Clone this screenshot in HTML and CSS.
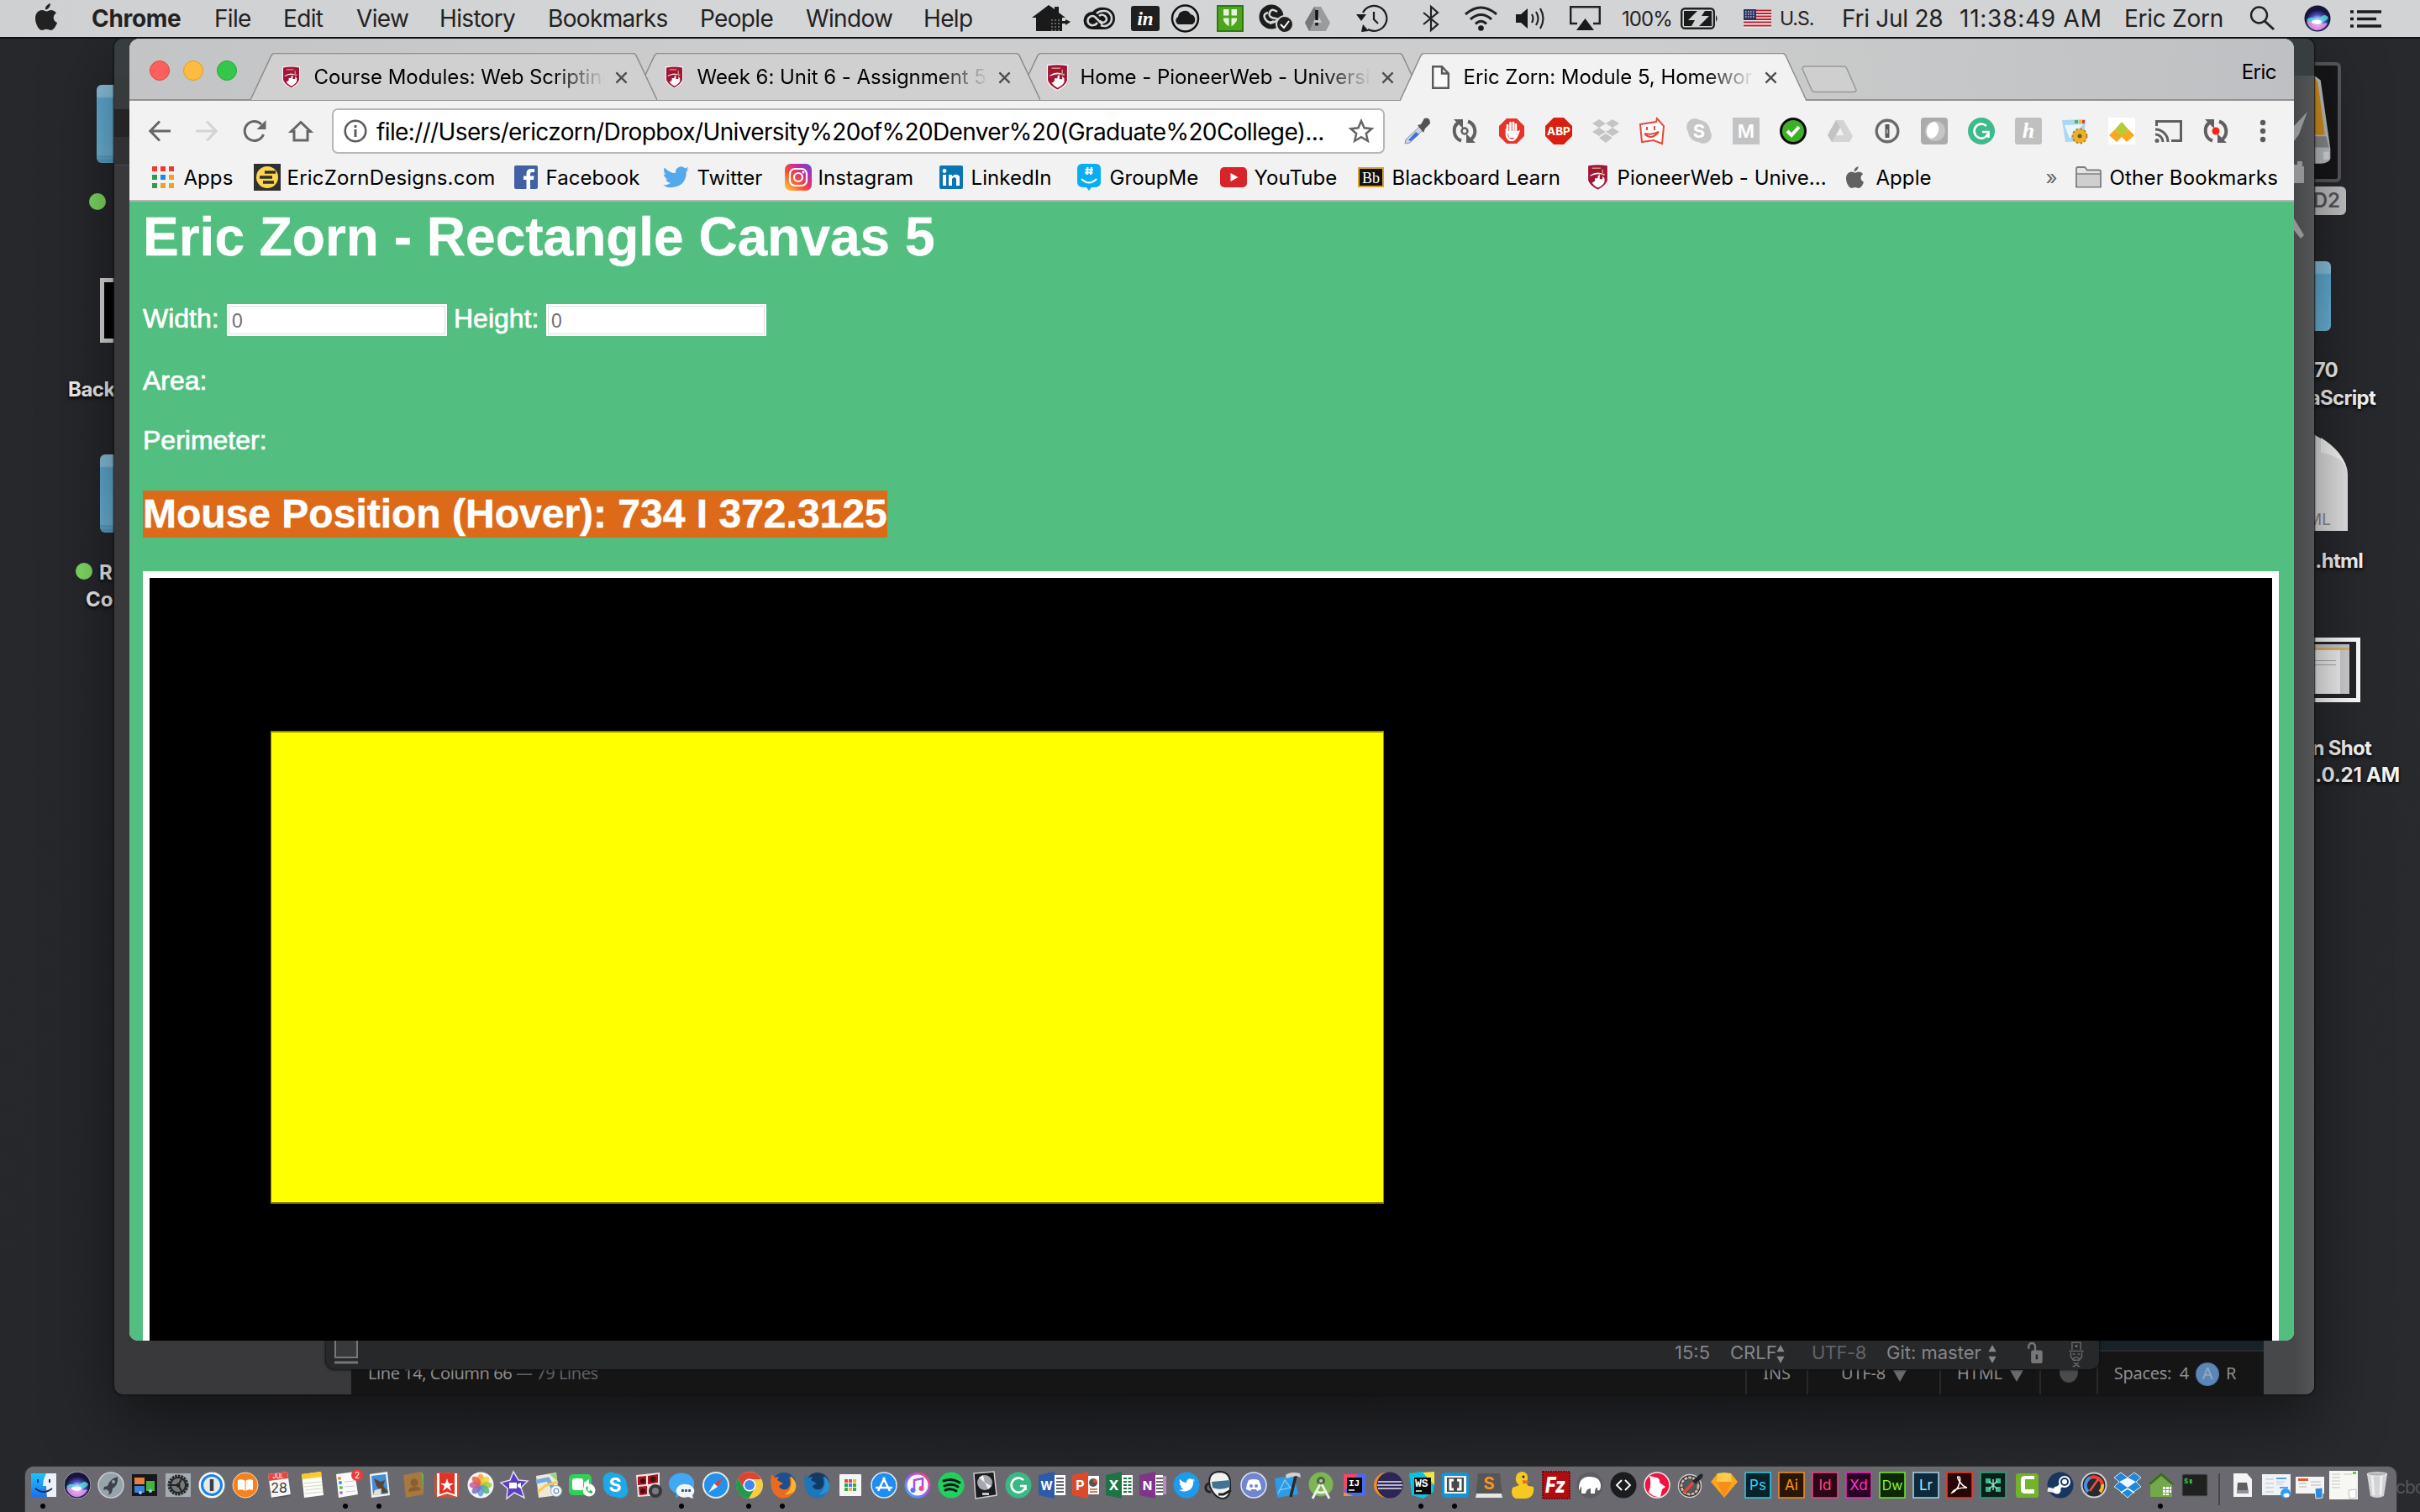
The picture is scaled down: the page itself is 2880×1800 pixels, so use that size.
FILE: index.html
```html
<!DOCTYPE html>
<html lang="en">
<head>
<meta charset="utf-8">
<title>Eric Zorn: Module 5, Homework</title>
<link rel="stylesheet" href="styles.css">
</head>
<body>
<svg class="defs" aria-hidden="true">
  <defs>
    <symbol id="shield" viewBox="0 0 22 28"><path d="M0 1Q11-1 22 1V17Q21 23 11 28Q1 23 0 17Z" fill="#fff"/><path d="M1 2Q11 0 21 2V17Q20 22 11 27Q2 22 1 17Z" fill="#a31538"/><path d="M5 20L8 18V15H11V13L13 11V16H16V13L18 15V19Q16 23 11 25Q7 23 5 20ZM3 12Q10 7 17 11L18 10V12Q10 9 3 13Z" fill="#fff"/><path d="M5 4.500H14M16 6V12" stroke="#c9a070" stroke-width="1.300"/></symbol>
    <symbol id="apple" viewBox="0 0 26 32"><path d="M18 0C18 4 15 7.500 12 7.500C11.600 4 14.500 1 18 0ZM18.500 8C21 8 23.500 9.300 25 11.500C20 14.500 21 21 26 23C24.500 27.500 21.500 32 18.500 32C16.500 32 15.500 30.800 13.200 30.800C11 30.800 9.800 32 8 32C4 32 0 24 0 18C0 11.500 4 8 8 8C10.300 8 12 9.500 13.500 9.500C15 9.500 16.500 8 18.500 8Z"/></symbol>
    <symbol id="bird" viewBox="0 0 24 20"><path d="M24 2.300Q22.700 3 21.200 3.200Q22.700 2.200 23.300.5Q21.800 1.300 20.100 1.700A5 5 0 0 0 11.700 6.200Q5.500 5.900 1.500 1Q-.5 5 3 7.500Q2 7.500 .8 6.900Q.9 10.700 4.700 11.800Q3.700 12 2.500 11.800Q3.600 15 7.100 15.300Q4 17.700 0 17.300Q3 19.400 7.500 19.400Q21.700 18.600 21.500 4.800Q23 3.800 24 2.300Z"/></symbol>
    <symbol id="tab" viewBox="0 0 484 57" preserveAspectRatio="none"><path d="M0 57L25 3Q26.500.5 29 .5H455Q457.500.5 459 3L484 57"/></symbol>
    <symbol id="close" viewBox="0 0 16 16"><path d="M1.500 1.500L14.500 14.500M14.500 1.500L1.500 14.500" stroke="#4b4b4b" stroke-width="2.400"/></symbol>
    <symbol id="sync" viewBox="0 0 32 32"><path d="M9 5.500A12.500 12.500 0 0 0 12 27.500M23 26.500A12.500 12.500 0 0 0 20 4.500" fill="none" stroke="#5f6062" stroke-width="4"/><path d="M3 2H14V13ZM29 30H18V19Z" fill="#5f6062"/></symbol>
    <radialGradient id="sirig" cx=".5" cy=".65"><stop offset="0" stop-color="#fff"/><stop offset=".3" stop-color="#b9c8ff"/><stop offset=".6" stop-color="#4b50c0"/><stop offset="1" stop-color="#17153b"/></radialGradient>
    <symbol id="siri" viewBox="0 0 32 32"><circle cx="16" cy="16" r="15.500" fill="#17153b"/><circle cx="16" cy="16" r="14.500" fill="url(#sirig)"/><path d="M3 18C9 10 14 20 19 15S27 12 29 15C26 21 20 20 16 20S8 24 3 18Z" fill="#4fe3dc" opacity=".8"/><path d="M3 20C8 17 12 24 18 23S26 20 28 22C24 29 18 30 15 30S6 28 3 20Z" fill="#f59be2" opacity=".8"/><ellipse cx="15" cy="20" rx="6" ry="2.500" fill="#fff"/></symbol>
    <linearGradient id="bluev" x2="0" y2="1"><stop offset="0" stop-color="#1ac7fb"/><stop offset="1" stop-color="#1d6ff2"/></linearGradient>
    <linearGradient id="insta" x1="0" y1="1" x2="1" y2="0"><stop offset="0" stop-color="#ffd34d"/><stop offset=".4" stop-color="#f5502f"/><stop offset=".7" stop-color="#c32aa3"/><stop offset="1" stop-color="#5b4ddb"/></linearGradient>
    <linearGradient id="rainbow" x1="0" y1="1" x2="1" y2="0"><stop offset="0" stop-color="#23b8ff"/><stop offset=".5" stop-color="#9a5bf5"/><stop offset="1" stop-color="#ff3d68"/></linearGradient>
  </defs>
</svg>

<!-- Desktop icons -->
<div class="desk folder f1"></div><div class="desk dot d1"></div>
<div class="desk frame"></div><div class="desk label l1">Back</div>
<div class="desk folder f2"></div><div class="desk dot d2"></div>
<div class="desk label l2">R</div><div class="desk label l3">Co</div>
<div class="desk drive"><svg viewBox="0 0 60 135"><path d="M0 4H18L26 10L40 108V122Q38 128 26 129H0Z" fill="#c2c7ca"/><path d="M0 5H16L22 12L32 88H0Z" fill="#dc981f"/><path d="M0 90H34L38 106H0Z" fill="#8d9092"/><path d="M30 112H38V123H30Z" fill="#e2e6e8"/></svg></div>
<div class="desk tag">D2</div>
<div class="desk folder f3"></div>
<div class="desk label r1">70</div><div class="desk label r2">aScript</div>
<svg class="desk doc" viewBox="0 0 94 117"><path d="M0 0H50Q94 24 94 50V117H0Z" fill="#e4e4e4"/><path d="M62 6Q88 22 93 44Q88 28 62 24Z" fill="#fafafa"/><text x="74" y="110" text-anchor="end" font-size="19" fill="#8a8a8a">ML</text></svg>
<div class="desk label r3">.html</div>
<div class="desk thumb"><i></i></div>
<div class="desk label r4">n Shot</div><div class="desk label r5">.0.21 AM</div>

<!-- Text editor behind the browser -->
<section class="win editor">
  <div class="ed-top"></div><div class="ed-tabs"></div><div class="ed-sub"></div><div class="ed-body"></div>
  <div class="ed-right"><svg viewBox="0 0 24 160"><path d="M0 18L16 1L6 28L0 36ZM0 64H4V60H10V66H12V86H0ZM0 128L12 148L8 152L0 142Z" fill="#929394"/></svg></div>
  <footer class="ed-status">
    <span class="pos">Line 14, Column 66 <em>— 79 Lines</em></span>
    <span class="cell">INS</span><span class="cell">UTF-8 <b class="tri"></b></span><span class="cell">HTML <b class="tri"></b></span><span class="cell"><b class="ball"></b></span>
    <span class="cell spaces">Spaces:&nbsp; 4 <b class="lamp">A</b> R</span>
  </footer>
</section>

<!-- IDE window behind the browser -->
<section class="win ide">
  <svg class="ide-box" viewBox="0 0 28 42"><path d="M1 0V34H27V0Z" fill="#38393a" stroke="#777" stroke-width="2"/><path d="M0 40H28" stroke="#777" stroke-width="3"/></svg>
  <div class="ide-info">
    <span>15:5</span><span>CRLF</span><svg viewBox="0 0 12 26"><path d="M6 1L11 10H1ZM6 25L11 16H1Z" fill="#85868a"/></svg><span class="dim">UTF-8</span><span>Git: master</span><svg viewBox="0 0 12 26"><path d="M6 1L11 10H1ZM6 25L11 16H1Z" fill="#85868a"/></svg>
    <svg viewBox="0 0 20 28"><path d="M2 9V6A4 4 0 0 1 10 6V12" fill="none" stroke="#777" stroke-width="2.500"/><rect x="5" y="11" width="14" height="16" rx="2" fill="#777"/><path d="M12 16V22" stroke="#28292b" stroke-width="2.500"/></svg>
    <svg viewBox="0 0 26 44"><path d="M6 15V3H20V15M1 17H25M4 19V26L8 32H18L22 26V19M7 22H11M15 22H19M8 30Q13 24 18 30M7 42H11M15 42H19M9 36L17 42M17 36L9 42" fill="none" stroke="#66676a" stroke-width="2"/><circle cx="13" cy="9" r="2" fill="#777"/></svg>
  </div>
</section>

<!-- Menu bar -->
<header class="menubar">
  <svg class="m-apple" viewBox="0 0 26 32"><use href="#apple" fill="#222"/></svg>
  <b>Chrome</b><span>File</span><span>Edit</span><span>View</span><span>History</span><span>Bookmarks</span><span>People</span><span>Window</span><span>Help</span>
  <svg width="46" height="34" viewBox="0 0 46 34"><path d="M0 16L20 1L27 6V3H32V10L40 16H36V20H40V18L46 21L40 25V23H36V32H5V16Z"/><path d="M23 19H34M23 23H34M23 27H34M23 31H34" stroke="#aaa" stroke-dasharray="2 2"/></svg>
  <svg width="40" height="28" viewBox="0 0 40 28"><path d="M12 6Q18 0 26 1A13 13 0 0 1 26 27H12A10.500 10.500 0 0 1 12 6Z" fill="#161616"/><g fill="none" stroke="#d4d5d6" stroke-width="2.600"><path d="M24 21L15 12A5.500 5.500 0 1 0 13 22Q16 22 18 19M17 8Q20 5 25 5A9 9 0 1 1 22 22M20 11Q23 8 27 11Q31 15 27 18Q24 20 21 17"/></g></svg>
  <svg width="34" height="30" viewBox="0 0 34 30"><rect width="34" height="30" rx="3" fill="#1f1f20"/><text x="17" y="23" text-anchor="middle" class="serif-i" font-size="23" fill="#fff">in</text></svg>
  <svg width="35" height="34" viewBox="0 0 35 34"><circle cx="17.500" cy="17" r="15.500" fill="none" stroke="#111" stroke-width="2.500"/><path d="M9 24A5 5 0 0 1 9 15A8 8 0 0 1 24 12A6.500 6.500 0 0 1 26 24Z"/></svg>
  <svg width="32" height="32" viewBox="0 0 32 32"><rect x="1" y="1" width="30" height="30" fill="#4da51d" stroke="#2c7a10" stroke-width="2"/><path d="M8 5H24V18Q22 23 16 26Q10 23 8 18Z" fill="#e4f4dc"/><path d="M16 5V26M8 14H24" stroke="#4da51d" stroke-width="3"/></svg>
  <svg width="41" height="34" viewBox="0 0 41 34"><circle cx="15" cy="15" r="14.500" fill="#1c1c1c"/><path d="M22 9Q15 4 13 10T20 17T13 23M11 10Q4 12 8 18T18 20" fill="none" stroke="#d4d5d6" stroke-width="2.500"/><circle cx="31" cy="24" r="10" fill="#222" stroke="#d4d5d6" stroke-width="2"/><path d="M26 24L30 28L36 20" fill="none" stroke="#fff" stroke-width="2"/></svg>
  <svg width="30" height="30" viewBox="0 0 30 30"><path d="M11 1H19L30 20L25 30H5L0 20Z" fill="#9a9b9c"/><path d="M11 1L15 9L5 30L0 20Z" fill="#77787a"/><path d="M15 10L10 20H20Z" fill="#c8c9ca"/><path d="M14 5V17M14 20V23.500" stroke="#111" stroke-width="3.500"/></svg>
  <svg width="38" height="34" viewBox="0 0 38 34"><g fill="none" stroke="#1d1d1d" stroke-width="2.200"><path d="M8 10A15 15 0 1 1 14 30M21 9V18L26 23"/></g><path d="M0 12H12L6 20ZM6 33L8 24L15 32Z"/></svg>
  <svg width="20" height="32" viewBox="0 0 20 32"><path d="M1 9L18 23L10 30V2L18 9L1 23" fill="none" stroke="#222" stroke-width="2.200"/></svg>
  <svg width="41" height="30" viewBox="0 0 41 30"><g fill="none" stroke="#222" stroke-width="3"><path d="M2 10Q20.500-6 39 10M8 16Q20.500 5 33 16M14 21.500Q20.500 15 27 21.500"/></g><circle cx="20.500" cy="26.500" r="3.300"/></svg>
  <svg width="34" height="28" viewBox="0 0 34 28"><path d="M0 9H6L14 2V26L6 19H0Z"/><path d="M19 9Q22 14 19 19M24 6Q29 14 24 22M29 2Q36 14 29 26" fill="none" stroke="#222" stroke-width="2.200"/></svg>
  <svg width="37" height="30" viewBox="0 0 37 30"><path d="M9 21H1.200V1.200H35.800V21H28" fill="none" stroke="#222" stroke-width="2.400"/><path d="M18.500 15L29 29H8Z"/></svg>
  <span class="sm">100%</span>
  <svg width="46" height="26" viewBox="0 0 46 26"><rect x="1.200" y="1.200" width="38.600" height="23.600" rx="4" fill="none" stroke="#222" stroke-width="2.400"/><path d="M42 9Q45 13 42 17Z"/><path d="M4 4H20L9 15H17L13 22H4ZM22 22L34 10H25L29 4H37V22Z"/></svg>
  <svg width="33" height="22" viewBox="0 0 33 22"><path fill="#f4f0f0" d="M0 0H33V22H0Z"/><path d="M0 1.500H33M0 5H33M0 8.500H33M0 12H33M0 15.500H33M0 19.500H33" stroke="#b3202f" stroke-width="1.900"/><path fill="#303460" d="M0 0H15V13H0Z"/><path d="M2 3H14M2 6H14M2 9H14" stroke="#c9cbe0" stroke-dasharray="1.500 1.500" stroke-width="1.400"/></svg>
  <span class="sm us">U.S.</span><span class="tight">Fri Jul 28</span><span class="wide">11:38:49 AM</span><span class="tight">Eric Zorn</span>
  <svg width="31" height="30" viewBox="0 0 31 30"><circle cx="11.500" cy="11" r="9.500" fill="none" stroke="#222" stroke-width="2.400"/><path d="M18 18L29 28" stroke="#222" stroke-width="3"/></svg>
  <svg width="32" height="32"><use href="#siri"/></svg>
  <svg width="37" height="21" viewBox="0 0 37 21"><path d="M0 2H4M8 2H37M0 10.500H4M8 10.500H31M0 19H4M8 19H37" stroke="#1d1d1d" stroke-width="3.600"/></svg>
</header>

<!-- Browser window -->
<main class="win browser">
  <nav class="tabstrip">
    <div class="lights"><i></i><i></i><i></i></div>
    <div class="tab"><svg class="shape"><use href="#tab"/></svg><svg class="fav"><use href="#shield"/></svg><span class="title">Course Modules: Web Scripting</span><svg class="x"><use href="#close"/></svg></div>
    <div class="tab"><svg class="shape"><use href="#tab"/></svg><svg class="fav"><use href="#shield"/></svg><span class="title">Week 6: Unit 6 - Assignment 5</span><svg class="x"><use href="#close"/></svg></div>
    <div class="tab"><svg class="shape"><use href="#tab"/></svg><svg class="fav big"><use href="#shield"/></svg><span class="title">Home - PioneerWeb - Universit</span><svg class="x"><use href="#close"/></svg></div>
    <div class="tab active"><svg class="shape"><use href="#tab"/></svg><svg class="fav" viewBox="0 0 21 28"><path d="M1.200 1.200H12L19.800 9.500V26.800H1.200ZM12 1.200V9.500H19.800" fill="#fafafa" stroke="#5a5a5a" stroke-width="2.400"/></svg><span class="title">Eric Zorn: Module 5, Homewor</span><svg class="x"><use href="#close"/></svg></div>
    <svg class="newtab" viewBox="0 0 66 33"><path d="M4 1H50Q53 1 54 4L65 29Q65 31.500 62 31.500H16Q13 31.500 12 29L1 4Q1 1 4 1Z" fill="#cfcfd0" stroke="#98999a" stroke-width="1.500"/></svg>
    <span class="profile">Eric</span>
  </nav>

  <div class="toolbar">
    <svg width="26" height="26" viewBox="0 0 26 26"><path d="M26 13H2M13 1.500L1.800 13L13 24.500" fill="none" stroke="#666" stroke-width="3"/></svg>
    <svg width="26" height="26" viewBox="0 0 26 26"><path d="M0 13H24M13 1.500L24.200 13L13 24.500" fill="none" stroke="#d4d4d4" stroke-width="3"/></svg>
    <svg width="28" height="28" viewBox="0 0 28 28"><path d="M24.500 18A11.500 11.500 0 1 1 22 6" fill="none" stroke="#666" stroke-width="3"/><path d="M27.500 1V12H16.500Z" fill="#666"/></svg>
    <svg width="26" height="26" viewBox="0 0 26 26"><path d="M1.500 13.500L13 2.500L24.500 13.500H21V24H5V13.500Z" fill="none" stroke="#666" stroke-width="3"/></svg>
    <div class="address">
      <svg width="28" height="28" viewBox="0 0 28 28"><circle cx="14" cy="14" r="12.300" fill="none" stroke="#5c5c5c" stroke-width="2.600"/><path d="M14 12V21M14 7V10" stroke="#5c5c5c" stroke-width="3"/></svg>
      <span class="url">file:///Users/ericzorn/Dropbox/University%20of%20Denver%20(Graduate%20College)...</span>
      <svg width="30" height="30" viewBox="0 0 30 30"><path d="M15 3L18.600 11.300L27.500 12.200L20.800 18L22.800 26.800L15 22.200L7.200 26.800L9.200 18L2.500 12.200L11.400 11.300Z" fill="none" stroke="#666" stroke-width="2.500"/></svg>
    </div>
    <div class="ext">
      <svg viewBox="0 0 32 32"><path d="M18 11L22 15L7 30L1 31L2 26Z" fill="#c9d4e8" stroke="#8a93a0"/><path d="M14 17L18 20L8 28L5 27Z" fill="#3f70dc"/><path d="M16 9L20 8L24 1Q31-1 31 7L25 13L23 18Z" fill="#525354"/></svg>
      <svg viewBox="0 0 32 32"><use href="#sync"/><circle cx="16" cy="16" r="3.500" fill="none" stroke="#5f6062" stroke-width="2.500"/></svg>
      <svg viewBox="0 0 32 32"><path d="M10 1H22L31 10V22L22 31H10L1 22V10Z" fill="#e5352b"/><path d="M10 14V21Q11 27 17 27Q21 26 24 17L21 18V8M11 18V9M14.500 17V6M18 17V6M21 18V8" fill="none" stroke="#fff" stroke-width="2.600" stroke-linecap="round"/><path d="M11 16H21V24H13Z" fill="#fff"/></svg>
      <svg viewBox="0 0 32 32"><path d="M10 0H22L32 10V22L22 32H10L0 22V10Z" fill="#d81f10"/><text x="16" y="21" text-anchor="middle" font-size="13.500" font-weight="700" fill="#fff">ABP</text></svg>
      <svg viewBox="0 0 32 32"><path d="M8 2L16 7L8 12L0 7ZM24 2L32 7L24 12L16 7ZM8 12L16 17L8 22L0 17ZM24 12L32 17L24 22L16 17ZM8 24L16 19L24 24L16 30Z" fill="#c4c4c4"/></svg>
      <svg viewBox="0 0 32 32"><path d="M2 8L21 5L22 1L30 10L28 31L18 27L4 29Z" fill="#fff" stroke="#e5493a" stroke-width="2"/><path d="M10 11V15M19 10V15M7 19Q15 28 24 17Q16 21 7 19" fill="none" stroke="#e5493a" stroke-width="2"/></svg>
      <svg viewBox="0 0 32 32"><circle cx="11" cy="11" r="10" fill="#c6c6c6"/><circle cx="21" cy="21" r="10" fill="#c6c6c6"/><circle cx="16" cy="16" r="13" fill="#c6c6c6"/><text x="16" y="24" text-anchor="middle" font-size="22" font-weight="700" fill="#fff">S</text></svg>
      <svg viewBox="0 0 32 32"><path fill="#c3c3c4" d="M0 0H32V32H0Z"/><text x="16" y="24" text-anchor="middle" font-size="22" font-weight="600" fill="#fff">M</text></svg>
      <svg viewBox="0 0 32 32"><circle cx="16" cy="16" r="14.500" fill="#3fae29" stroke="#0a0a0a" stroke-width="3"/><path d="M9 16L14 21L23 11" fill="none" stroke="#fff" stroke-width="4"/></svg>
      <svg viewBox="0 0 32 32"><path d="M11 3H20L31 22L27 29H6L1 21Z" fill="#d4d4d4"/><path d="M11 3L16 12L6 29L1 21Z" fill="#c3c3c3"/><path d="M16 12L11 21H20Z" fill="#f2f2f2"/></svg>
      <svg viewBox="0 0 32 32"><circle cx="16" cy="16" r="12.800" fill="none" stroke="#6a6a6a" stroke-width="3.400"/><path d="M16 8V24" stroke="#5b5b5b" stroke-width="5"/><path d="M16 14V19" stroke="#bbb" stroke-width="1.500"/></svg>
      <svg viewBox="0 0 32 32"><rect width="32" height="32" rx="4" fill="#ababab"/><circle cx="17" cy="16" r="12" fill="#c5c5c5"/><ellipse cx="14" cy="15" rx="7" ry="10" transform="rotate(15 14 15)" fill="#fff"/></svg>
      <svg viewBox="0 0 32 32"><circle cx="16" cy="16" r="16" fill="#3dbb8b"/><path d="M22 10A8.500 8.500 0 1 0 24.500 17H17M24.500 16V24" fill="none" stroke="#fff" stroke-width="2.600"/></svg>
      <svg viewBox="0 0 32 32"><rect width="32" height="32" rx="3" fill="#c0c0c1"/><text x="16" y="24" text-anchor="middle" class="serif-i" font-size="26" font-weight="700" fill="#fff">h</text></svg>
      <svg viewBox="0 0 32 32"><path d="M1 3L29 2L27 28L5 29Z" fill="#a9d8f5"/><path d="M4 9L26 8L10 25Z" fill="#e9f6fd"/><path d="M16 3H20V7H16Z" fill="#52b848"/><path d="M21 3H24V7H21Z" fill="#f5b81c"/><path d="M25 3H28V7H25Z" fill="#e33b2d"/><circle cx="22" cy="22" r="8.500" fill="#eab12f" stroke="#c28612" stroke-dasharray="3 2" stroke-width="2"/><circle cx="22" cy="22" r="2.500" fill="#7a5410"/></svg>
      <svg viewBox="0 0 32 32"><path fill="#fff" d="M0 0H32V32H0Z"/><path d="M16 5L24 14L16 23L8 14Z" fill="#b5cc35"/><path d="M8 14L16 22L24 14L31 21L22 29L16 23L10 29L1 21Z" fill="#f8a823"/></svg>
      <svg viewBox="0 0 32 32"><path d="M1.500 10V4.500H30.500V27.500H19" fill="none" stroke="#606060" stroke-width="3"/><path d="M0 14A15 15 0 0 1 15 29M0 20A9 9 0 0 1 9 29" fill="none" stroke="#606060" stroke-width="3"/><circle cx="2" cy="27.500" r="2.500" fill="#606060"/></svg>
      <svg viewBox="0 0 32 32"><use href="#sync"/><circle cx="16" cy="16" r="4.500" fill="#fb2217"/></svg>
      <svg viewBox="0 0 32 32"><g fill="#5a5a5a"><circle cx="16" cy="6" r="3.200"/><circle cx="16" cy="16" r="3.200"/><circle cx="16" cy="26" r="3.200"/></g></svg>
    </div>
  </div>

  <div class="bookmarks">
    <svg width="26" height="26" viewBox="0 0 26 26"><path fill="#ee3a32" d="M0 0h6v6H0zM10 0h6v6h-6zM20 0h6v6h-6z"/><path fill="#359a51" d="M0 10h6v6H0zM0 20h6v6H0z"/><path fill="#1e88f0" d="M10 10h6v6h-6z"/><path fill="#f0a124" d="M20 10h6v6h-6zM10 20h6v6h-6zM20 20h6v6h-6z"/></svg><span>Apps</span>
    <svg width="32" height="32" viewBox="0 0 32 32"><path fill="#2f3032" d="M0 0H32V32H0Z"/><circle cx="16" cy="16" r="13" fill="#ffd54d"/><path d="M13 10H26M7 16H22M11 22H24" stroke="#2f3032" stroke-width="3.600"/></svg><span class="ezd">EricZornDesigns.com</span>
    <svg width="28" height="28" viewBox="0 0 28 28"><rect width="28" height="28" rx="2" fill="#4160a5"/><path d="M19 28V17H23L23.500 12.500H19V10Q19 8 21 8H24V4H20Q14.500 4 14.500 9.500V12.500H11V17H14.500V28Z" fill="#fff"/></svg><span>Facebook</span>
    <svg width="31" height="28" viewBox="0 0 24 20"><use href="#bird" fill="#53a9ec"/></svg><span>Twitter</span>
    <svg width="32" height="32" viewBox="0 0 32 32"><rect width="32" height="32" rx="7" fill="url(#insta)"/><rect x="6" y="6" width="20" height="20" rx="6" fill="none" stroke="#fff" stroke-width="2.200"/><circle cx="16" cy="16" r="5" fill="none" stroke="#fff" stroke-width="2.200"/><circle cx="22" cy="10" r="1.500" fill="#fff"/></svg><span>Instagram</span>
    <svg width="28" height="28" viewBox="0 0 28 28"><rect width="28" height="28" rx="2" fill="#0a74b4"/><path d="M4 11H8V24H4ZM11 11H15V13Q20 8.500 24 13V24H20V16Q17.500 12 15 16V24H11Z" fill="#fff"/><circle cx="6" cy="6.500" r="2.400" fill="#fff"/></svg><span>LinkedIn</span>
    <svg width="28" height="32" viewBox="0 0 28 32"><path d="M6 0H22Q28 0 28 6V22Q28 27 22 28H17L14 32L11 28H6Q0 27 0 22V6Q0 0 6 0Z" fill="#09aef1"/><path d="M12.500 4L11.500 13M17 4L16 13M9.500 7H19M9 10.500H18.500M5 18Q14 27 23 18" fill="none" stroke="#fff" stroke-width="2"/></svg><span>GroupMe</span>
    <svg width="32" height="24" viewBox="0 0 32 24"><rect width="32" height="24" rx="5" fill="#d7242a"/><path d="M12.500 7L21.500 12L12.500 17Z" fill="#fff"/></svg><span>YouTube</span>
    <svg width="31" height="24" viewBox="0 0 31 24"><path d="M1 1H30V23H1Z" fill="#111" stroke="#d9a52d" stroke-width="2"/><text x="15.500" y="18.500" text-anchor="middle" class="serif" font-size="18" fill="#fff">Bb</text></svg><span>Blackboard Learn</span>
    <svg width="27" height="32"><use href="#shield"/></svg><span>PioneerWeb - Unive...</span>
    <svg width="21" height="26" viewBox="0 0 26 32"><use href="#apple" fill="#606162"/></svg><span>Apple</span>
    <span class="more">»</span>
    <svg width="31" height="26" viewBox="0 0 31 26"><path d="M1 24.500V3Q1 1 3 1H11L14 4.500H28Q30 4.500 30 6.500V24.500Z" fill="#e4e4e4" stroke="#7d7d7d" stroke-width="1.800"/><path d="M2 9.500H29V24H2Z" fill="#cfcfcf"/><path d="M1 9H30" stroke="#7d7d7d" stroke-width="1.500"/></svg><span class="other">Other Bookmarks</span>
  </div>

  <article class="page">
    <h1>Eric Zorn - Rectangle Canvas 5</h1>
    <div class="fields"><label>Width:</label><input placeholder="0"><label class="ht">Height:</label><input placeholder="0"></div>
    <p>Area:</p>
    <p>Perimeter:</p>
    <h2>Mouse Position (Hover): 734 I 372.3125</h2>
    <div class="canvas"><div class="rect"></div></div>
  </article>
</main>

<div class="behind">cbo</div>
<!-- Dock -->
<footer class="dock">
  <svg class="on" viewBox="0 0 32 32"><path fill="url(#bluev)" d="M1 2H19Q15 10 15 17H19Q19 24 20 30H1Z"/><path fill="#edf2f8" d="M19 2H31V30H20Q19 24 19 17H15Q15 10 19 2Z"/><path d="M9 9V13M23 9V13M6 20Q16 28 26 20" fill="none" stroke="#13304d" stroke-width="2"/></svg>
  <svg viewBox="0 0 32 32"><circle cx="16" cy="16" r="16" fill="#d9dadc"/><use href="#siri"/></svg>
  <svg viewBox="0 0 32 32"><circle cx="16" cy="16" r="15" fill="#97a3ab" stroke="#c6cdd1" stroke-width="1.500"/><path d="M24 6Q14 9 12 17L8 18L7 22L11 21L14 24L13 28L17 25L18 20Q25 16 24 6Z" fill="#3d4449"/><circle cx="19" cy="12" r="2" fill="#97a3ab"/></svg>
  <svg viewBox="0 0 32 32"><path d="M1 3H31V29H1Z" fill="#161719"/><path d="M4 7H16V15H4Z" fill="#e9803d"/><path d="M4 17H16V25H4Z" fill="#3c80d8"/><path d="M18 11H28V23H18Z" fill="#48b33c"/><circle cx="11" cy="25" r="2" fill="#8fd0f5"/><circle cx="23" cy="23" r="2" fill="#8fd0f5"/></svg>
  <svg viewBox="0 0 32 32"><path d="M1 2H31V30H1Z" fill="#a5adb2"/><circle cx="16" cy="16" r="10.500" fill="#77797b" stroke="#262728" stroke-width="4" stroke-dasharray="2.500 1"/><circle cx="16" cy="16" r="9" fill="none" stroke="#262728" stroke-width="2"/><path d="M16 16L20 9M16 16H8M16 16L20 23" stroke="#222" stroke-width="2"/><circle cx="16" cy="16" r="2.500" fill="#222"/></svg>
  <svg viewBox="0 0 32 32"><circle cx="16" cy="16" r="15.500" fill="#f7f8f9"/><circle cx="16" cy="16" r="11.500" fill="#e8ebee" stroke="#1a83e6" stroke-width="3"/><path d="M16 9V23" stroke="#3c4045" stroke-width="4.500"/></svg>
  <svg viewBox="0 0 32 32"><circle cx="16" cy="16" r="15" fill="#f4831f" stroke="#fcdcb8"/><path d="M7 10Q12 8 16 11Q20 8 25 10V22Q20 20 16 23Q12 20 7 22Z" fill="#fff"/><path d="M16 11V23" stroke="#f4831f"/></svg>
  <svg viewBox="0 0 32 32"><path d="M3 3L26 0L30 28L7 31Z" fill="#f8f8f8"/><path d="M3 3L26 0L27 8L4 11Z" fill="#e04a43"/><path d="M7 31L30 27V29L8 32Z" fill="#555"/><text x="16" y="25" text-anchor="middle" font-size="16" fill="#333">28</text><text x="15" y="8" text-anchor="middle" font-size="7" fill="#fff">JUL</text></svg>
  <svg viewBox="0 0 32 32"><path d="M3 3L26 0L29 28L6 31Z" fill="#fdfdf8"/><path d="M3 3L26 0L27 6L4 9Z" fill="#fcc82b"/><path d="M6 14L26 12M6 18L27 16M7 22L27 20M7 26L28 24" stroke="#d5d5cf"/></svg>
  <svg class="on" viewBox="0 0 32 32"><path d="M4 3L26 0L30 27L7 31Z" fill="#fafafa"/><circle cx="8" cy="8" r="2" fill="#f78b1f"/><circle cx="9" cy="13" r="2" fill="#1e9df2"/><circle cx="10" cy="19" r="2" fill="#5ac53b"/><circle cx="10" cy="25" r="2" fill="#b86be0"/><path d="M14 12L26 11M14 18L26 17M15 24L27 23" stroke="#ccc"/><circle cx="29" cy="4" r="7" fill="#ec3b38"/><text x="29" y="8" text-anchor="middle" font-size="10" fill="#fff">2</text></svg>
  <svg class="on" viewBox="0 0 32 32"><path d="M4 3L25 0L28 28L6 31Z" fill="#f3f3f0"/><path d="M6 5L23 3L26 26L8 28Z" fill="#3b8fdc"/><path d="M9 8L17 12L22 10L20 17L26 24L20 26L12 17Z" fill="#5d452d"/><path d="M10 22L18 20L17 27L8 28Z" fill="#e7e2d5"/></svg>
  <svg viewBox="0 0 32 32"><path d="M4 4L25 0L28 27L7 31Z" fill="#a87841"/><path d="M25 0L28 3V27Z" fill="#6db04b"/><circle cx="17" cy="13" r="4.500" fill="#8a5f2e"/><path d="M10 24Q11 17 17 18Q23 17 25 22Z" fill="#8a5f2e"/></svg>
  <svg viewBox="0 0 32 32"><rect x="1" y="1" width="30" height="30" rx="5" fill="#ca5239"/><path d="M4 2H28V30L16 26L4 30Z" fill="#fff"/><path d="M7 2H25V27L16 24L7 27Z" fill="#e33224"/><path d="M16 8L18 14H24L19 17L21 23L16 19L11 23L13 17L8 14H14Z" fill="#fff"/></svg>
  <svg viewBox="0 0 32 32"><circle cx="16" cy="16" r="15.500" fill="#f5f5f5"/><g fill-opacity=".85"><ellipse cx="16" cy="9" rx="4" ry="6.500" fill="#f8a12c"/><ellipse cx="16" cy="9" rx="4" ry="6.500" fill="#f6d22f" transform="rotate(45 16 16)"/><ellipse cx="16" cy="9" rx="4" ry="6.500" fill="#a6c93c" transform="rotate(90 16 16)"/><ellipse cx="16" cy="9" rx="4" ry="6.500" fill="#4fb17c" transform="rotate(135 16 16)"/><ellipse cx="16" cy="9" rx="4" ry="6.500" fill="#5a9edb" transform="rotate(180 16 16)"/><ellipse cx="16" cy="9" rx="4" ry="6.500" fill="#7e6cc0" transform="rotate(225 16 16)"/><ellipse cx="16" cy="9" rx="4" ry="6.500" fill="#c15f9e" transform="rotate(270 16 16)"/><ellipse cx="16" cy="9" rx="4" ry="6.500" fill="#ea5a4f" transform="rotate(315 16 16)"/></g></svg>
  <svg viewBox="0 0 32 32"><path d="M15 0L21 10L32 11L24 19L28 31L16 25L7 32L8 20L0 13L11 10Z" fill="#5b3dc2" stroke="#e1d7f5" stroke-width="1.500"/><path d="M10 13H19V20H10ZM20 15L24 13V20L20 18Z" fill="#fff"/></svg>
  <svg viewBox="0 0 32 32"><path d="M2 5L26 1L29 28L5 31Z" fill="#eeead7"/><path d="M2 12L16 9L26 26" fill="none" stroke="#74a9e8" stroke-width="5"/><path d="M4 24L14 16L28 12" fill="none" stroke="#f8cb49" stroke-width="3"/><path d="M18 3L26 2L27 11Z" fill="#9dd27a"/><circle cx="26" cy="23" r="6.500" fill="#f7f7f7" stroke="#aaa"/><circle cx="26" cy="23" r="3" fill="none" stroke="#4773c3"/></svg>
  <svg viewBox="0 0 32 32"><rect x="1" y="3" width="27" height="25" rx="5" fill="#31d158"/><rect x="5" y="8" width="13" height="14" rx="3" fill="#fff"/><path d="M19 13L25 9V20L19 17Z" fill="#fff"/><circle cx="25" cy="22" r="7.500" fill="#fff"/><path d="M21 19Q22 26 29 26L29 23L26 22L25 24Q23 22 23 21L24 20L23 17Z" fill="#2fbe4c"/></svg>
  <svg viewBox="0 0 32 32"><circle cx="11" cy="10" r="9.500" fill="#1ea9e6"/><circle cx="22" cy="22" r="9.500" fill="#1ea9e6"/><circle cx="16" cy="16" r="14" fill="#1ea9e6"/><text x="16" y="24" text-anchor="middle" font-size="23" font-weight="700" fill="#fff">S</text></svg>
  <svg viewBox="0 0 32 32"><path d="M1 4L29 1L29 28L3 30Z" fill="#f1e5e2"/><path d="M3 6L13 5V15L3 16ZM15 5L27 3V13L15 15ZM4 18L14 17V27L5 28Z" fill="#b51020"/><circle cx="9" cy="11" r="3" fill="#3a1512"/><circle cx="21" cy="9" r="3.500" fill="#3a1512"/><circle cx="9" cy="23" r="3" fill="#3a1512"/><circle cx="24" cy="23" r="8" fill="#38383a"/><circle cx="24" cy="23" r="4" fill="#7b7c82"/></svg>
  <svg class="on" viewBox="0 0 32 32"><path d="M16 2A14 12.500 0 0 1 16 27L8 31L9 26A14 12.500 0 0 1 16 2Z" fill="#3fa9f5"/><ellipse cx="15" cy="14" rx="15" ry="12.500" fill="#3fa9f5"/><path d="M21 15A10 8 0 1 0 23 30L29 32L28 28A10 8 0 0 0 21 15Z" fill="#f0f6fb"/><path d="M15 22.500H26" stroke="#3b546d" stroke-width="2.800" stroke-dasharray="2.800 1.300"/></svg>
  <svg viewBox="0 0 32 32"><circle cx="16" cy="16" r="15" fill="#2492ea" stroke="#e7e9eb" stroke-width="2"/><path d="M25 7L18 18L14 14Z" fill="#ee3d36"/><path d="M7 25L18 18L14 14Z" fill="#f6f6f6"/></svg>
  <svg class="on" viewBox="0 0 32 32"><circle cx="16" cy="16" r="16" fill="#f8cd41"/><path d="M2 8A16 16 0 0 1 30 9H16A7 7 0 0 0 10 20Z" fill="#dc4437"/><path d="M2 8A16 16 0 0 0 15 32L22 20A7 7 0 0 1 10 20Z" fill="#23984e"/><circle cx="16" cy="16" r="7.500" fill="#fff"/><circle cx="16" cy="16" r="6" fill="#4286ee"/></svg>
  <svg class="on" viewBox="0 0 32 32"><circle cx="17" cy="15" r="14" fill="#1c4e90"/><path d="M2 3L6 7L11 6L9 10L16 14L11 17Q12 22 20 21Q27 17 23 6Q33 10 31 20Q27 31 16 32Q-2 29 2 3Z" fill="#ea6a22"/><path d="M25 5Q35 14 29 24Q24 28 18 27Q28 21 25 5Z" fill="#f9b429"/></svg>
  <svg viewBox="0 0 32 32"><circle cx="17" cy="15" r="14" fill="#123a66"/><path d="M2 3L6 7L11 6L9 10L16 14L11 17Q12 22 20 21Q27 17 23 6Q33 10 31 20Q27 31 16 32Q-2 29 2 3Z" fill="#1c76b8"/><path d="M25 5Q35 14 29 24Q24 28 18 27Q28 21 25 5Z" fill="#2a8fcf"/></svg>
  <svg viewBox="0 0 32 32"><rect x="3" y="3" width="26" height="26" rx="1" fill="#f5f5f5"/><path d="M9 9h4v4H9zM14 9h4v4h-4z" fill="#dc4d3c"/><path d="M19 9h4v4h-4z" fill="#f1b52c"/><path d="M9 14h4v4H9z" fill="#28a35b"/><path d="M14 14h4v4h-4z" fill="#3d82ed"/><path d="M19 14h4v4h-4zM19 19h4v4h-4z" fill="#3aa65d"/><path d="M9 19h4v4H9z" fill="#3aa65d"/><path d="M14 19h4v4h-4z" fill="#f1b52c"/></svg>
  <svg viewBox="0 0 32 32"><circle cx="16" cy="16" r="15" fill="#1d8df1" stroke="#dfe7ee" stroke-width="1.500"/><path d="M17 7L9 23M15 7L23 23M6 19H26" stroke="#fff" stroke-width="2.500"/></svg>
  <svg viewBox="0 0 32 32"><circle cx="16" cy="16" r="14" fill="#fbfafc" stroke="url(#rainbow)" stroke-width="3"/><path d="M12 22V10L22 8V20" fill="none" stroke="#a64fe0" stroke-width="2.500"/><circle cx="10.500" cy="22" r="3" fill="#5e72f1"/><circle cx="20.500" cy="20" r="3" fill="#e84c96"/></svg>
  <svg viewBox="0 0 32 32"><circle cx="16" cy="16" r="15.500" fill="#1fd15f"/><path d="M7 11Q17 7 26 13M8 17Q17 13 24 18M9 22Q16 19 22 23" fill="none" stroke="#15171a" stroke-width="3" stroke-linecap="round"/></svg>
  <svg viewBox="0 0 32 32"><path d="M3 2L27 0L30 28L5 32Z" fill="#1b1c1e" stroke="#cfcfd1" stroke-width="1.500"/><circle cx="16" cy="13" r="9" fill="#a5a8ae"/><path d="M16 13L9 7L14 4ZM16 13L24 17L20 21Z" fill="#eef0f3"/><path d="M13 25H21V28H13Z" fill="#c8c8ca"/></svg>
  <svg viewBox="0 0 32 32"><circle cx="16" cy="16" r="15.500" fill="#3bb984"/><path d="M22 10A8.500 8.500 0 1 0 24.500 17H18M24.500 16V22" fill="none" stroke="#fff" stroke-width="2.600"/></svg>
  <svg viewBox="0 0 32 32"><path d="M14 4H32V28H14Z" fill="#fff"/><path d="M21 8H30M21 12H30M21 16H30M21 20H30M21 24H30" stroke="#333" stroke-width="1.500"/><path d="M0 4L19 0V32L0 28Z" fill="#2a5bac"/><text x="9.500" y="22" text-anchor="middle" font-size="14" font-weight="700" fill="#fff">W</text></svg>
  <svg viewBox="0 0 32 32"><path d="M14 5H32V27H14Z" fill="#fff"/><circle cx="25" cy="13" r="5" fill="#555"/><path d="M25 13V8A5 5 0 0 1 30 13Z" fill="#e04d2d"/><path d="M21 21H30M21 24H30" stroke="#d5492b" stroke-width="1.500"/><path d="M0 4L19 0V32L0 28Z" fill="#dd4a2b"/><text x="9.500" y="22" text-anchor="middle" font-size="16" font-weight="700" fill="#fff">P</text></svg>
  <svg viewBox="0 0 32 32"><path d="M14 4H32V28H14Z" fill="#fff"/><path d="M21 8H31M21 12H31M21 16H31M21 20H31M21 24H31" stroke="#1d7044" stroke-width="2.200" stroke-dasharray="4 1.500"/><path d="M0 4L19 0V32L0 28Z" fill="#1e7346"/><text x="9.500" y="22" text-anchor="middle" font-size="16" font-weight="700" fill="#fff">X</text></svg>
  <svg viewBox="0 0 32 32"><path d="M14 4H28V28H14Z" fill="#fff"/><path d="M28 5H32V27H28Z" fill="#b78bc0"/><path d="M20 8H28M20 12H28M20 16H28M20 20H28M20 24H28" stroke="#333" stroke-width="1.500"/><path d="M0 4L19 0V32L0 28Z" fill="#81358a"/><text x="9.500" y="22" text-anchor="middle" font-size="15" font-weight="700" fill="#fff">N</text></svg>
  <svg viewBox="0 0 32 32"><circle cx="16" cy="16" r="15.500" fill="#1f9bee"/><use href="#bird" x="7" y="8" width="19" height="16" fill="#fff"/></svg>
  <svg viewBox="0 0 32 32"><path d="M4 18Q0 1 15 0Q29 0 28 16Q29 30 20 32Q10 32 4 18Z" fill="#f2f2f2" stroke="#222" stroke-width="2"/><path d="M6 12L28 10V18Q16 23 7 19Z" fill="#3e7590"/><path d="M3 14A5 5 0 0 0 5 24M14 27L20 27L29 22" fill="none" stroke="#222" stroke-width="3"/></svg>
  <svg viewBox="0 0 32 32"><circle cx="16" cy="16" r="15" fill="#7086d2" stroke="#dfe3f2" stroke-width="1.500"/><path d="M10 10Q16 8 22 10Q25 15 25 21L20 23L19 21H13L12 23L7 21Q7 15 10 10Z" fill="#fff"/><circle cx="13" cy="17" r="2" fill="#7086d2"/><circle cx="19" cy="17" r="2" fill="#7086d2"/></svg>
  <svg viewBox="0 0 32 32"><path d="M1 8L24 4L29 27L4 31Z" fill="#2e9be5"/><path d="M5 26L13 10L23 24M6 22L24 18" fill="none" stroke="#8fcdf6" stroke-width="1.200"/><path d="M26 5L20 30" stroke="#28292b" stroke-width="3.500"/><path d="M14 4Q20-1 31 2L32 7L27 5L22 6L15 8Z" fill="#cfd1d5"/></svg>
  <svg viewBox="0 0 32 32"><circle cx="16" cy="15" r="14.500" fill="#7cb553"/><circle cx="16" cy="11" r="5" fill="#4a6a3d"/><path d="M15 15L6 32M17 15L26 32M9 23Q16 27 23 23" fill="none" stroke="#eff1ed" stroke-width="2.800"/><circle cx="16" cy="11" r="2" fill="#b9c9ac"/></svg>
  <svg viewBox="0 0 32 32"><path d="M3 3H29V29H3Z" fill="#4a6bf0"/><path d="M3 3H20L3 24Z" fill="#f8456a"/><path d="M3 24L14 29H3Z" fill="#f88c35"/><path d="M7 7H25V25H7Z" fill="#0a0a0a"/><text x="9" y="17" class="mono" font-size="11" font-weight="700" fill="#fff">IJ</text><path d="M9 22H16" stroke="#fff" stroke-width="1.500"/></svg>
  <svg viewBox="0 0 32 32"><circle cx="14" cy="16" r="15" fill="#f08e22"/><circle cx="18" cy="16" r="15.500" fill="#2c2556"/><path d="M4 12H32M3 16H33M4 20H32" stroke="#e9e8f1" stroke-width="1.600"/></svg>
  <svg class="on" viewBox="0 0 32 32"><path d="M1 2L16 0L31 5L30 24L18 32L4 28Z" fill="#12bfdc"/><path d="M17 1L31 0L31 16Z" fill="#f1e743"/><path d="M7 7H27V27H7Z" fill="#0b0b0b"/><text x="8" y="18" class="mono" font-size="13" font-weight="700" fill="#fff">WS</text><path d="M9 23H16" stroke="#fff" stroke-width="1.500"/></svg>
  <svg class="on" viewBox="0 0 32 32"><rect x="0" y="1" width="32" height="30" rx="4" fill="#1593d2"/><path d="M3 5H29V26H3Z" fill="#f3f6f7"/><path d="M6 7H26V24H6Z" fill="#46484a"/><path d="M14 10H10V21H14M18 10H22V21H18" fill="none" stroke="#fff" stroke-width="3"/></svg>
  <svg viewBox="0 0 32 32"><path d="M3 2H29L32 30H0Z" fill="#555658"/><path d="M1 26H31L32 31H0Z" fill="#e6e6e6"/><text x="16" y="21" text-anchor="middle" font-size="20" font-weight="700" fill="#f7941e">S</text></svg>
  <svg viewBox="0 0 32 32"><path d="M8 7Q9 0 16 0Q23 1 22 9Q20 15 23 17L29 18Q31 30 20 32H8Q1 29 4 19L12 16Q7 12 8 7Z" fill="#f6c920"/><path d="M16 10L24 11Q22 15 16 14Z" fill="#ea6b1f"/><circle cx="17" cy="6" r="1.500" fill="#222"/></svg>
  <svg viewBox="0 0 32 32"><path d="M0 0H32V32H0Z" fill="#b00d10" stroke="#7a0709" stroke-width="2" stroke-dasharray="2 1"/><text x="15" y="25" text-anchor="middle" font-size="26" font-style="italic" font-weight="800" fill="#fff" textLength="24" lengthAdjust="spacingAndGlyphs">Fz</text></svg>
  <svg viewBox="0 0 32 32"><circle cx="16" cy="16" r="15.500" fill="#5e5e61"/><path d="M3 23Q2 7 14 6Q28 5 29 16Q29 24 25 22V19Q22 18 22 26H17V20Q12 20 11 26H6V17Z" fill="#fff"/></svg>
  <svg viewBox="0 0 32 32"><circle cx="16" cy="16" r="15.500" fill="#1b1c1d"/><path d="M14 10L8 16L14 22M18 10L24 16L18 22" fill="none" stroke="#fff" stroke-width="1.800"/></svg>
  <svg viewBox="0 0 32 32"><circle cx="16" cy="16" r="15" fill="#ef1343" stroke="#f6e7ea" stroke-width="1.500"/><path d="M7 5L15 7Q20 8 19 13L26 18L22 21L20 30Q12 31 6 24Q10 16 7 5Z" fill="#fff"/></svg>
  <svg viewBox="0 0 32 32"><circle cx="15" cy="17" r="13.500" fill="#29292b" stroke="#ccc" stroke-width="1.500"/><circle cx="15" cy="17" r="10" fill="none" stroke="#c9b7a0" stroke-width="3" stroke-dasharray="4 1"/><circle cx="15" cy="17" r="8" fill="#55585c"/><path d="M8 25L19 13" stroke="#dd4b39" stroke-width="3.500"/><path d="M18 11L27 3Q32 1 30 7L22 15Z" fill="#22252b"/></svg>
  <svg viewBox="0 0 32 32"><path d="M8 2H24L32 12L16 31L0 12Z" fill="#f8a61c"/><path d="M8 2L16 1L24 2L25 12H7Z" fill="#fccb4c"/><path d="M7 12H25L16 31Z" fill="#f78e1b"/></svg>
  <svg viewBox="0 0 32 32"><path d="M1 1H31V31H1Z" fill="#07222b" stroke="#2ccdea" stroke-width="1.500"/><text x="16" y="22" text-anchor="middle" font-size="17" fill="#2fd4f3">Ps</text></svg>
  <svg viewBox="0 0 32 32"><path d="M1 1H31V31H1Z" fill="#2a1500" stroke="#f38e1c" stroke-width="1.500"/><text x="16" y="22" text-anchor="middle" font-size="17" fill="#fb9527">Ai</text></svg>
  <svg viewBox="0 0 32 32"><path d="M1 1H31V31H1Z" fill="#2f0414" stroke="#ea4488" stroke-width="1.500"/><text x="16" y="22" text-anchor="middle" font-size="17" fill="#fa4d90">Id</text></svg>
  <svg viewBox="0 0 32 32"><path d="M1 1H31V31H1Z" fill="#2b0123" stroke="#ee2bc1" stroke-width="1.500"/><text x="16" y="22" text-anchor="middle" font-size="17" fill="#fb38ce">Xd</text></svg>
  <svg viewBox="0 0 32 32"><path d="M1 1H31V31H1Z" fill="#0d2705" stroke="#74ea2d" stroke-width="1.500"/><text x="16" y="22" text-anchor="middle" font-size="16" fill="#85f53a">Dw</text></svg>
  <svg viewBox="0 0 32 32"><path d="M1 1H31V31H1Z" fill="#0c2a3c" stroke="#a9d4e8" stroke-width="1.500"/><text x="16" y="22" text-anchor="middle" font-size="17" fill="#bbe1f2">Lr</text></svg>
  <svg viewBox="0 0 32 32"><path d="M1 1H31V31H1Z" fill="#290605" stroke="#ea3b25" stroke-width="1.500"/><path d="M14 6Q18 5 16 13Q14 22 7 25Q10 19 25 19Q20 18 15 10Q13 7 14 6Z" fill="none" stroke="#fff" stroke-width="1.500"/></svg>
  <svg viewBox="0 0 32 32"><path d="M1 1H31V31H1Z" fill="#0b1f1a" stroke="#2ea47a" stroke-width="1.500"/><path d="M7 8H13V14H7ZM19 8H25V14H19ZM7 18H13V24H7ZM19 18H25V24H19Z" fill="#37b98a"/><path d="M11 11L21 21M21 11L11 21M16 9V22" stroke="#8be0c0" stroke-width="1.500"/></svg>
  <svg viewBox="0 0 32 32"><rect x="3" y="2" width="27" height="29" rx="3" fill="#72b32c"/><path d="M25 9V5H14Q9 5 9 10V21Q9 26 14 26H25V21H14V9Z" fill="#fff"/></svg>
  <svg viewBox="0 0 32 32"><circle cx="16" cy="16" r="15.500" fill="#17375e"/><path d="M1 21L10 23L21 12" stroke="#e9edf1" stroke-width="5" fill="none"/><circle cx="21" cy="12" r="6" fill="#17375e" stroke="#fff" stroke-width="2"/><circle cx="21" cy="12" r="3" fill="#fff"/><circle cx="12" cy="22" r="4.500" fill="#fff"/></svg>
  <svg viewBox="0 0 32 32"><circle cx="16" cy="16" r="14.500" fill="#2a2a2c" stroke="#cdced0" stroke-width="2"/><path d="M9 24A10.500 10.500 0 0 1 12 7" fill="none" stroke="#4a8ee0" stroke-width="4"/><path d="M12 7A10.500 10.500 0 0 1 26 15" fill="none" stroke="#ee4035" stroke-width="4"/><path d="M26 15A10.500 10.500 0 0 1 23 24" fill="none" stroke="#f8b52c" stroke-width="4"/><path d="M11 23L21 9" stroke="#ea5247" stroke-width="2.500"/></svg>
  <svg viewBox="0 0 32 32"><path d="M8 1L16 7L24 1L32 7L26 12L32 18L26 22L16 31L6 22L0 18L6 12L0 7Z" fill="#1f88dd" stroke="#d5e8f7"/><path d="M16 7L26 12L16 19L6 12Z" fill="#f3f8fc"/><path d="M16 20L24 25M16 20L8 25" stroke="#f3f8fc" stroke-width="1.500"/></svg>
  <svg class="on" viewBox="0 0 32 32"><path d="M16 1L32 15H29V30H3V15H0Z" fill="#72a94a"/><path d="M16 1L32 15H28L16 5L4 15H0Z" fill="#3a6b25"/><path d="M18 18h3v3h-3zM22 18h3v3h-3zM26 18h2v3h-2zM18 22h3v3h-3zM22 22h3v3h-3zM26 22h2v3h-2zM18 26h3v2h-3zM22 26h3v2h-3z" fill="#fff"/></svg>
  <svg viewBox="0 0 32 32"><rect x="1" y="3" width="30" height="26" rx="1.500" fill="#1f2121" stroke="#5b5c5c"/><text x="3" y="14" class="mono" font-size="9" font-weight="700" fill="#31c442">$▮</text></svg>
  <i class="sep"></i>
  <svg viewBox="0 0 32 32"><path d="M5 2H21L27 9V30H5Z" fill="#f4f4f4"/><path d="M10 13H21L23 25H9Z" fill="#5b6063"/><path d="M9 22H23V26H9Z" fill="#8f9396"/></svg>
  <svg viewBox="0 0 32 32"><path d="M-1 3H33V28H-1Z" fill="#eff2f6"/><path d="M3 9H13M3 14H13M3 19H13M3 24H13" stroke="#b9c2cc"/><path d="M16 8H28M20 19H30" stroke="#4aa4f4" stroke-width="2"/><path d="M16 12H26M16 15H24" stroke="#c3c8ce"/><circle cx="27" cy="26" r="6" fill="#2b9df4"/><ellipse cx="28" cy="28" rx="3.500" ry="2.500" fill="#fff"/></svg>
  <svg viewBox="0 0 32 32"><path d="M-1 6H33V26H-1Z" fill="#f5f5f5"/><path d="M2 8H14V11H2Z" fill="#e15a32"/><path d="M3 14H12M3 18H12M17 12H29M17 16H29" stroke="#b6b6b6"/><path d="M22 20L31 19V31L23 32Z" fill="#2e8ad8" stroke="#eee"/></svg>
  <svg viewBox="0 0 32 32"><path d="M-1-1H33V33H-1Z" fill="#f7f7f4"/><path d="M2 3H12M2 7H12M2 11H12M2 15H12M2 19H12M16 3H26" stroke="#c5c8bd"/><path d="M27 0H31V3H27Z" fill="#6fc14a"/><path d="M22 22L31 21V31L23 32Z" fill="#fff" stroke="#bbb"/></svg>
  <svg viewBox="0 0 32 32"><path d="M4 3L8 29Q16 33 24 29L28 3Z" fill="#d2d3d6"/><path d="M10 5L12 28M21 5L20 28" stroke="#eee" stroke-width="3"/><ellipse cx="16" cy="3" rx="12" ry="2.200" fill="#b2b3b6" stroke="#f0f0f0"/></svg>
</footer>
</body>
</html>
```
FILE: styles.css
```css
* { box-sizing: border-box; }
html, body { margin: 0; width: 2880px; height: 1800px; overflow: hidden; }
body { position: relative; background: linear-gradient(100deg, #27282c 0, #242529 50%, #292a2e 100%); font-family: Inter, "Liberation Sans", sans-serif; color: #000; }
svg { display: block; overflow: visible; }
svg text { font-family: Inter, "Liberation Sans", sans-serif; }
svg .serif { font-family: "Liberation Serif", serif; }
svg .serif-i { font-family: "Liberation Serif", serif; font-style: italic; font-weight: 700; }
svg .mono { font-family: "Liberation Mono", monospace; }
.defs { position: absolute; width: 0; height: 0; }

/* desktop */
.desk { position: absolute; }
.folder { width: 40px; height: 93px; border-radius: 6px; background: linear-gradient(#8cc5e0 0 14px, #60aed7 16px, #6fb9de 84px, #529ec6 85px, #68b0d6 87px, #529ec6 90px, #64acd3); }
.f1 { left: 115px; top: 101px; }
.f2 { left: 119px; top: 541px; }
.f3 { left: 2734px; top: 311px; height: 83px; }
.dot { width: 20px; height: 20px; border-radius: 50%; background: #80da63; }
.d1 { left: 106px; top: 230px; }
.d2 { left: 90px; top: 670px; }
.frame { left: 119px; top: 331px; width: 80px; height: 77px; border: 5px solid #dcdcdd; background: #050505; }
.label { font-size: 24px; font-weight: 700; line-height: 30px; color: #f0f0f0; white-space: nowrap; text-shadow: 0 2px 4px #000; }
.l1 { left: 81px; top: 449px; letter-spacing: -.5px; }
.l2 { left: 118px; top: 667px; }
.l3 { left: 102px; top: 699px; }
.r1, .r2, .r3, .r4, .r5 { text-align: right; color: #f4f4f4; letter-spacing: -.7px; }
.r1 { right: 98px; top: 426px; }
.r2 { right: 53px; top: 459px; }
.r3 { right: 68px; top: 653px; }
.r4 { right: 58px; top: 876px; }
.r5 { right: 24px; top: 908px; letter-spacing: -.2px; }
.drive { left: 2700px; top: 74px; width: 86px; height: 143px; border: 4px solid #59595b; border-radius: 6px; background: #17171a; padding: 3px 0 0 50px; }
.drive svg { width: 50px; height: 125px; margin-left: -14px; }
.tag { left: 2700px; top: 222px; width: 92px; height: 34px; border-radius: 6px; background: #c5c5c6; color: #58585a; font-size: 24px; font-weight: 600; line-height: 34px; text-align: right; padding-right: 7px; }
.doc { left: 2700px; top: 515px; width: 94px; height: 117px; }
.thumb { left: 2700px; top: 759px; width: 109px; height: 77px; border: 5px solid #fff; background: #26262a; padding: 3px 8px 5px 0; }
.thumb i { display: block; height: 100%; border-top: 4px solid #c9cacc; background: linear-gradient(#e0b469 0 3px, transparent 3px), linear-gradient(90deg, transparent 80px, #cfcfd1 80px), linear-gradient(transparent 15px, #aaa 15px 16px, transparent 16px 20px, #aaa 20px 21px, transparent 21px) 0 0/75px 60px no-repeat #f2f2f2; }

/* windows */
.win { position: absolute; overflow: hidden; }
.editor { left: 136px; top: 46px; width: 2618px; height: 1614px; border-radius: 10px; background: #39393b; box-shadow: 0 0 2px 1px #111, 0 30px 80px rgba(0,0,0,.5); display: grid; grid-template: 44px 73px 34px 1fr 51px / 282px 1fr 60px; }
.ed-top { grid-area: 1 / 1 / 2 / 4; background: #383d3f; }
.ed-tabs { grid-area: 2 / 1 / 3 / 3; background: linear-gradient(#383b3c 40px, #242425 40px); }
.ed-sub { grid-area: 3 / 1 / 4 / 3; background: #303133; border-bottom: 1px solid #48494b; }
.ed-body { grid-area: 4 / 2 / 5 / 3; background: #172128; border-bottom: 2px solid #2a2b2c; }
.ed-right { grid-area: 2 / 3 / 6 / 4; background: linear-gradient(90deg, #474849 36px, #545557); padding: 42px 0 0 36px; }
.ed-right svg { width: 24px; height: 160px; }
.ed-status { grid-area: 5 / 2 / 6 / 3; background: #151516; color: #8e8e8f; font: 20px/27px "Noto Sans", sans-serif; display: grid; grid-template-columns: 1659px 73px 158px 119px 68px 199px; white-space: nowrap; }
.ed-status .pos { padding: 21px 0 0 20px; letter-spacing: -.45px; line-height: 10px; }
.ed-status em { font-style: normal; color: #626263; }
.cell { border-left: 2px solid #29292a; display: flex; justify-content: center; gap: 9px; padding-top: 21px; line-height: 10px; letter-spacing: -.2px; }
.tri { border: 8px solid transparent; border-top: 14px solid #6b6b6c; border-bottom: 0; height: 0; margin-top: 1px; }
.ball { width: 22px; height: 26px; border-radius: 50%; background: #4b4b4c; margin-top: -10px; }
.cell.spaces { gap: 8px; letter-spacing: -.3px; padding-right: 14px; }
.lamp { width: 28px; height: 28px; border-radius: 50%; background: radial-gradient(#5b87b8 60%, #36516e); color: #9ab; font-weight: 400; text-align: center; line-height: 26px; margin-top: -8px; }
.ide { left: 388px; top: 1560px; width: 2110px; height: 70px; border-radius: 0 0 10px 10px; background: #27282a; box-shadow: 0 0 3px 1px #111; display: flex; justify-content: space-between; padding: 36px 14px 0 10px; color: #85868a; font-size: 22px; line-height: 29px; }
.ide-box { width: 28px; height: 42px; margin-top: -14px; }
.ide-info { display: grid; grid-template-columns: 66px 54px 43px 89px 120px 47px 46px 26px; }
.ide-info svg { height: 24px; width: 12px; margin-top: 4px; }
.ide-info svg:nth-of-type(n+3) { width: 20px; height: 27px; margin-top: 1px; }
.ide-info svg:last-child { width: 26px; height: 32px; margin-top: 0; }
.ide-info .dim { color: #626366; letter-spacing: -.5px; }

/* menu bar */
.menubar { position: absolute; left: 0; top: 0; width: 2880px; height: 46px; background: linear-gradient(90deg, #cfd0d1, #d4d5d6 30%, #d2d3d4); border-bottom: 2px solid #111215; display: grid; grid-template-columns: 67px 146px 82px 87px 99px 129px 181px 126px 140px 129px 60px 58px 47px 55px 50px 55px 61px 79px 49px 62px 64px 63px 69px 75px 44px 74px 140px 196px 148px 65px 55px 60px; align-items: center; padding-left: 42px; font-size: 28px; line-height: 44px; color: #222; fill: #1a1a1a; }
.m-apple { width: 26px; height: 32px; margin-top: -5px; }
.menubar span, .menubar b { letter-spacing: -.66px; white-space: nowrap; padding-top: 1px; line-height: 43px; }
.menubar b { font-weight: 700; letter-spacing: -.3px; }
.menubar .sm { font-size: 24px; letter-spacing: -.9px; margin-left: -1px; }
.menubar .us { font-size: 23px; letter-spacing: -1px; }
.menubar .tight { letter-spacing: -.27px; margin-left: -1px; }
.menubar .wide { letter-spacing: .75px; margin-left: -1px; }

/* browser chrome */
.browser { left: 154px; top: 46px; width: 2576px; height: 1550px; border-radius: 12px 12px 10px 10px; background: #f2f2f2; display: flex; flex-direction: column; }
.tabstrip { position: relative; height: 74px; flex: none; display: flex; align-items: flex-end; background: linear-gradient(90deg, #c3c4c6, #cccdcc 30%, #cccdcc 70%, #bfc0c3); box-shadow: inset 0 -2px #919191; padding-left: 24px; }
.lights { width: 148px; height: 74px; display: flex; gap: 16px; align-items: center; flex: none; }
.lights i { width: 24px; height: 24px; border-radius: 50%; background: #fc605c; border: 1.500px solid #e0443e; margin-top: 2px; }
.lights i:nth-child(2) { background: #fdbc40; border-color: #dfa023; }
.lights i:nth-child(3) { background: #34c84a; border-color: #22ab34; }
.tab { position: relative; width: 484px; height: 57px; flex: none; display: flex; align-items: center; margin-left: -28px; padding-left: 38px; }
.tab:nth-child(2) { z-index: 4; }
.tab:nth-child(3) { z-index: 3; }
.tab:nth-child(4) { z-index: 2; }
.tab.active { z-index: 5; }
.shape { position: absolute; left: 0; top: 0; width: 484px; height: 57px; fill: #d0d0d0; stroke: #8d8d8d; stroke-width: 1.500px; }
.active .shape { fill: #f2f2f2; }
.tab:not(.active) { height: 55px; margin-bottom: 2px; padding-top: 2px; }
.tab:not(.active) .shape { height: 56px; }
.fav { position: relative; width: 21px; height: 28px; margin-right: 15px; flex: none; }
.fav.big { width: 27px; height: 32px; margin: 0 12px 0 -3px; }
.title { position: relative; flex: none; width: 352px; padding-left: 1.500px; font-size: 24px; white-space: nowrap; line-height: 40px; -webkit-mask-image: linear-gradient(90deg, #000 288px, transparent 348px); mask-image: linear-gradient(90deg, #000 288px, transparent 348px); letter-spacing: -.05px; }
.x { position: relative; width: 15px; height: 15px; margin: 2px 0 0 8px; }
.newtab { width: 66px; height: 33px; margin: 0 0 9px -6px; }
.profile { margin-left: auto; padding-right: 21px; font-size: 24px; letter-spacing: -.5px; line-height: 68px; }
.toolbar { flex: none; height: 72px; display: grid; grid-template-columns: 56px 56px 56px 50px 1253px 1fr; align-items: center; padding-left: 23px; }
.address { height: 54px; border: 2px solid #b7b7b7; border-radius: 7px; background: #fff; display: grid; grid-template-columns: 39px 1157px 30px; align-items: center; padding-left: 12px; }
.url { font-size: 28px; letter-spacing: -.63px; white-space: nowrap; line-height: 46px; padding-top: 2px; }
.ext { display: flex; gap: 23.900px; padding-left: 23px; }
.ext svg { width: 32px; height: 32px; flex: none; }
.bookmarks { flex: none; height: 48px; display: grid; grid-template-columns: 38px 83px 40px 270px 38px 139px 41px 104px 40px 144px 38px 126px 39px 131px 41px 123px 41px 231px 37px 272px 36px 202px 35px 41px 210px; align-items: center; padding: 0 0 9px 27px; border-bottom: 2px solid #b4b4b4; font-size: 24px; white-space: nowrap; }
.bookmarks span { margin-left: -.5px; padding-top: 1.500px; letter-spacing: .06px; }
.bookmarks .ezd { letter-spacing: .22px; }
.bookmarks .other { letter-spacing: .2px; }
.bookmarks .more { color: #666; }

/* page */
.page { flex: 1; background: #52be80; color: #fff; padding: 6px 18px 0 16px; font-family: "Liberation Sans", Arial, sans-serif; display: flex; flex-direction: column; }
h1 { margin: 0; font-size: 64px; line-height: 73px; height: 74px; -webkit-text-stroke: .4px #fff; }
.fields { display: grid; grid-template-columns: 100px 270px 110px 262px; margin-top: 42px; font-size: 32px; line-height: 35px; height: 38px; }
.fields label, .page p { -webkit-text-stroke: .7px #fff; }
.fields input { width: 262px; height: 38px; border: 2px solid #fff; box-shadow: inset 0 0 0 1px #ddd; background: #fff; padding: 2px 0 0 4px; border-radius: 0; font: 23px "Liberation Sans", Arial, sans-serif; }
.fields input::placeholder { color: #707070; opacity: 1; }
.page p { margin: 35px 0 0; font-size: 32px; line-height: 36px; }
h2 { margin: 42px 0 0; align-self: flex-start; height: 56px; line-height: 55px; font-size: 48px; background: #dd6a18; white-space: nowrap; -webkit-text-stroke: .5px #fff; }
.canvas { margin-top: 40px; flex: 1; border: 8px solid #fff; border-bottom: 0; background: #000; padding: 182px 0 0 144px; }
.rect { width: 1325px; height: 563px; background: #ff0; border: solid #8a8a00; border-width: 2px 1px; }

/* dock */
.behind { position: absolute; left: 2851px; top: 1756px; width: 60px; font-size: 21px; line-height: 30px; letter-spacing: -1px; color: #55565a; }
.dock { position: absolute; left: 30px; top: 1746px; width: 2822px; height: 54px; border-radius: 10px 10px 0 0; background: #6a696f; box-shadow: 0 0 2px #555; display: flex; gap: 8px; padding: 6px 0 0 6px; }
.dock > svg { width: 32px; height: 32px; flex: none; }
.dock > .on { height: 48px; padding-bottom: 16px; background: radial-gradient(circle at 15px 41px, #050505 2.700px, transparent 3.400px); }
.sep { width: 2px; height: 38px; background: #47474b; margin: 2px 3px 0 4px; }
```
